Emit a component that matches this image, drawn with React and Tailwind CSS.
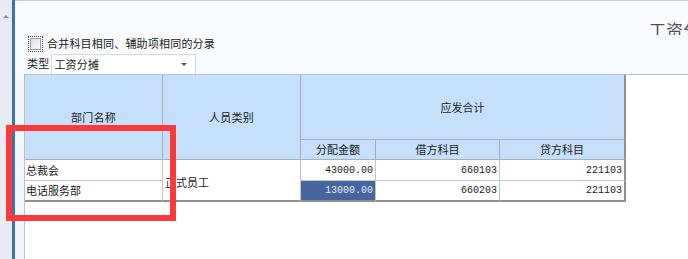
const cjk = { fontFamily: '"Noto Sans CJK SC", "Microsoft YaHei", sans-serif' };

export default function App() {
  const head = 'bg-[#c6e0fb] border-r border-b border-[#a6b0bc] flex items-center justify-center';
  const cell = 'bg-white border-r border-b border-[#c4c4c4] flex items-center';
  const num = 'font-["Liberation_Mono",monospace] text-[10px] justify-end pr-[2px] text-[#222]';

  return (
    <div
      className="relative w-[688px] h-[259px] flex overflow-hidden bg-[#f9fafd] text-[11px] text-[#1a1a1a]"
      style={cjk}
    >
      {/* left scroll strip */}
      <div className="w-[12px] h-full bg-[#e8ecf1] pt-[15px] flex justify-center">
        <div className="w-0 h-0 border-l-[3px] border-r-[3px] border-b-[3px] border-l-transparent border-r-transparent border-b-[#8a9098]" />
      </div>
      <div className="w-[3px] h-full bg-[#4070b4]" />

      <div className="flex-1 flex flex-col border-t border-[#c3cad3] min-w-0">
        {/* title */}
        <div className="h-[34px] pl-[634px] pt-[20px] whitespace-nowrap overflow-hidden">
          <span className="text-[17px] leading-[17px] text-[#4e4e4e]">工资分摊</span>
        </div>

        {/* checkbox row */}
        <div className="h-[18px] flex items-center pl-[13px] gap-[4px]">
          <div className="w-[15px] h-[16px] border border-dotted border-[#444] p-[1px]">
            <div className="w-full h-full border border-[#9aa0a8] bg-gradient-to-br from-[#d8dce1] to-white" />
          </div>
          <span className="leading-none tracking-[0.2px] -mt-[2px]">合并科目相同、辅助项相同的分录</span>
        </div>

        {/* type row */}
        <div className="h-[21px] flex items-end pl-[12px]">
          <span className="leading-[19px] mb-[1px] tracking-[0.2px]">类型</span>
          <div className="ml-[2px] w-[145px] h-[20px] bg-white border border-b-0 border-[#d6dbe2] flex items-center pl-[2px] pr-[8px]">
            <span className="flex-1 tracking-[0.2px]">工资分摊</span>
            <div className="w-0 h-0 border-l-[3px] border-r-[3px] border-t-[3px] border-l-transparent border-r-transparent border-t-[#555]" />
          </div>
        </div>

        {/* grid area */}
        <div className="flex-1 flex">
          <div className="w-[9px] bg-[#f5f7fb]" />
          <div className="flex-1 bg-white border-l border-t border-[#b8c0ca]">
            <div className="grid grid-cols-[138px_138px_75px_124px_126px] grid-rows-[65px_20px_21px_21px] w-max">
              <div className={`${head} row-span-2 tracking-[0.2px]`}>部门名称</div>
              <div className={`${head} row-span-2 tracking-[0.2px]`}>人员类别</div>
              <div className={`${head} col-span-3 border-r-2 border-r-[#909090]`}>应发合计</div>
              <div className={head}>分配金额</div>
              <div className={head}>借方科目</div>
              <div className={`${head} border-r-2 border-r-[#909090]`}>贷方科目</div>

              <div className={`${cell} pl-[1px]`}>总裁会</div>
              <div className={`${cell} row-span-2 pl-[2px] pt-[4px] border-b-2 border-b-[#8f8f8f]`}>正式员工</div>
              <div className={`${cell} ${num}`}>43000.00</div>
              <div className={`${cell} ${num}`}>660103</div>
              <div className={`${cell} ${num} border-r-2 border-r-[#909090]`}>221103</div>

              <div className={`${cell} pl-[1px] border-b-2 border-b-[#8f8f8f]`}>电话服务部</div>
              <div className={`${cell} ${num} !bg-[#4565a0] !text-[#e6ecf8] border-b-2 border-b-[#8f8f8f]`}>13000.00</div>
              <div className={`${cell} ${num} border-b-2 border-b-[#8f8f8f]`}>660203</div>
              <div className={`${cell} ${num} border-b-2 border-b-[#8f8f8f] border-r-2 border-r-[#909090]`}>221103</div>
            </div>
          </div>
        </div>
      </div>

      {/* red annotation box */}
      <div className="absolute left-[6px] top-[125px] w-[170px] h-[96px] border-[6px] border-[#fd3a3a]" />
    </div>
  );
}
